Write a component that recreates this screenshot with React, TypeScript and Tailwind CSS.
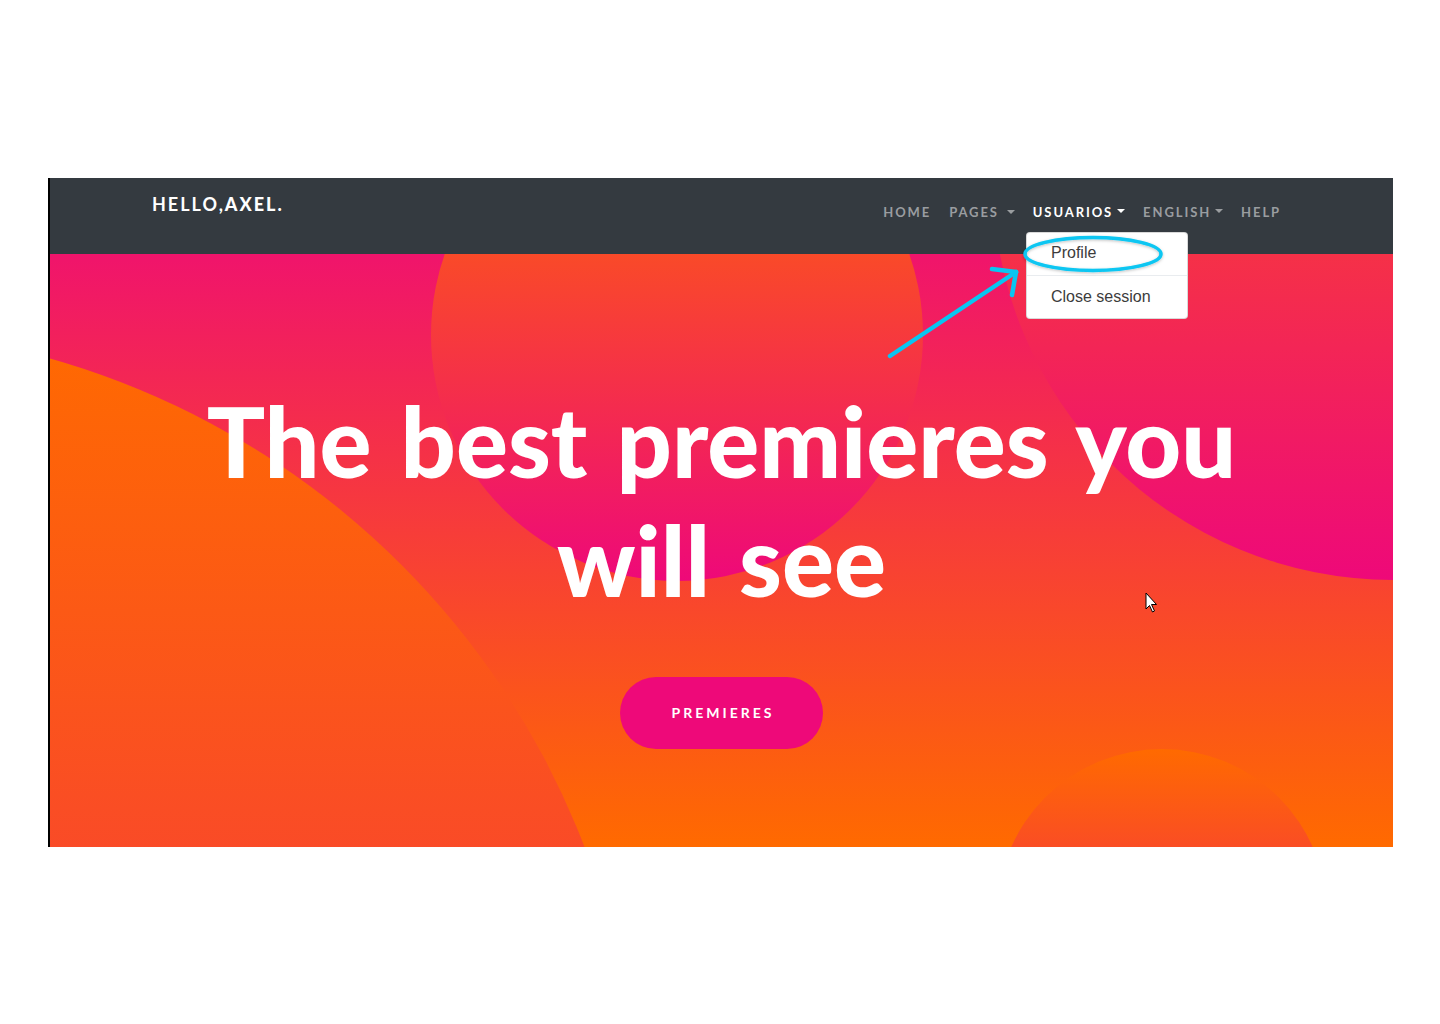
import React from "react";

function Caret() {
  return (
    <span className="inline-block w-0 h-0 border-l-[4px] border-r-[4px] border-t-[4px] border-l-transparent border-r-transparent border-t-current align-middle ml-[4px] mb-[3px]" />
  );
}

export default function App() {
  return (
    <div className="w-[1440px] h-[1024px] bg-white pt-[178px] pl-[48px]">
      <div className="relative w-[1345px] h-[669px] border-l-2 border-black overflow-hidden bg-[linear-gradient(0deg,#ff6a00_0%,#ee0979_100%)]">
        {/* background circles */}
        <div className="absolute left-[-1028px] top-[150px] w-[1616px] h-[1616px] rounded-full bg-[linear-gradient(0deg,#ee0979_0%,#ff6a00_100%)]" />
        <div className="absolute left-[943px] top-[-398px] w-[800px] h-[800px] rounded-full bg-[linear-gradient(0deg,#ee0979_0%,#ff6a00_100%)]" />
        <div className="absolute left-[947px] top-[571px] w-[330px] h-[330px] rounded-full bg-[linear-gradient(0deg,#ee0979_0%,#ff6a00_100%)]" />
        <div className="absolute left-[381px] top-[-89px] w-[492px] h-[492px] rounded-full bg-[linear-gradient(0deg,#ee0979_0%,#ff6a00_100%)]" />

        {/* navbar */}
        <nav className="relative z-20 h-[76px] bg-[#343a40] flex items-start justify-between pl-[102px] pr-[112px] font-['Lato',sans-serif]">
          <div className="pt-[14px] text-[18px] leading-[25px] tracking-[2px] text-white">
            <span className="font-bold">HELLO,</span>
            <span className="font-black">AXEL.</span>
          </div>
          <ul className="flex items-center gap-[18px] pt-[24px] text-[13px] leading-[20px] font-bold tracking-[1.9px] text-[#9a9da0]">
            <li>HOME</li>
            <li className="flex items-center">
              PAGES<span className="ml-[4px]"><Caret /></span>
            </li>
            <li className="flex items-center text-white">
              USUARIOS<Caret />
            </li>
            <li className="flex items-center">
              ENGLISH<Caret />
            </li>
            <li>HELP</li>
          </ul>
        </nav>

        {/* hero */}
        <div className="relative z-10 flex flex-col items-center">
          <h1 className="mt-[127px] text-center text-white font-['Lato',sans-serif] font-black text-[97px] leading-[119px] tracking-[0px] [word-spacing:6px]">
            The best premieres you
            <br />
            will see
          </h1>
          <button className="mt-[58px] w-[203px] h-[72px] rounded-full bg-[#ee0979] text-white font-['Lato',sans-serif] font-bold text-[14px] leading-[72px] tracking-[3px] pl-[3px]">
            PREMIERES
          </button>
        </div>

        {/* dropdown */}
        <div className="absolute z-30 left-[976px] top-[54px] w-[162px] h-[87px] bg-white rounded-[4px] border border-black/15 pt-[4px] font-['Liberation_Sans',Arial,sans-serif] text-[16px] text-[#3c3c3c]">
          <div className="h-[32px] leading-[32px] px-[24px]">Profile</div>
          <div className="mt-[6px] mb-[5px] h-px bg-[#e9ecef]" />
          <div className="h-[32px] leading-[32px] px-[24px]">Close session</div>
        </div>

        {/* annotations */}
        <svg className="absolute z-40 left-0 top-0 pointer-events-none" width="1345" height="669" viewBox="0 0 1345 669">
          <defs>
            <filter id="sh" x="-20%" y="-50%" width="140%" height="200%">
              <feDropShadow dx="0" dy="1" stdDeviation="1.5" floodColor="#000" floodOpacity="0.25" />
            </filter>
          </defs>
          <ellipse cx="1043" cy="76" rx="68" ry="16.5" fill="none" stroke="#08c6f2" strokeWidth="3.5" filter="url(#sh)" />
          <g stroke="#08c6f2" strokeWidth="4.5" strokeLinecap="round" fill="none">
            <line x1="840" y1="178" x2="966" y2="94" />
            <line x1="966" y1="94" x2="942" y2="91" />
            <line x1="966" y1="94" x2="962" y2="117" />
          </g>
          {/* cursor */}
          <path d="M1096 415 L1096 431 L1099.5 427.5 L1102.5 434 L1104.5 433 L1101.5 426.5 L1106.5 426.5 Z" fill="#fff" stroke="#000" strokeWidth="1" strokeLinejoin="round" />
        </svg>
      </div>
    </div>
  );
}
